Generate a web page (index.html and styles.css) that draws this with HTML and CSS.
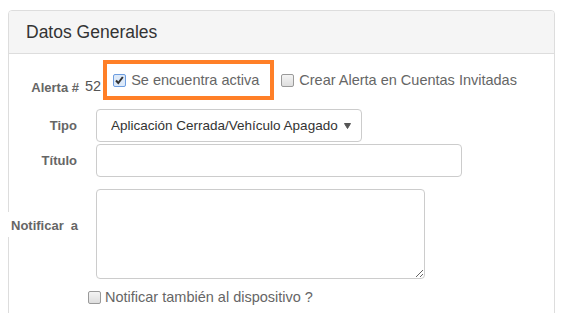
FILE: index.html
```html
<!DOCTYPE html>
<html lang="es">
<head>
  <meta charset="UTF-8">
  <meta name="viewport" content="width=device-width, initial-scale=1.0">
  <title>Datos Generales</title>
  <link rel="stylesheet" href="styles.css">
</head>
<body>
  <div class="panel">
    <div class="panel-heading">Datos Generales</div>
    <div class="panel-body">

      <!-- Alerta -->
      <div class="row row-alert">
        <label class="lbl">Alerta #</label>
        <span class="alert-num">52</span>
        <label class="check highlight"><input type="checkbox" checked>Se encuentra activa</label>
        <label class="check guest"><input type="checkbox">Crear Alerta en Cuentas Invitadas</label>
      </div>

      <!-- Tipo -->
      <div class="row row-type">
        <label class="lbl lbl-tight">Tipo</label>
        <select class="control select-type">
          <option>Aplicación Cerrada/Vehículo Apagado</option>
        </select>
      </div>

      <!-- Titulo -->
      <div class="row row-title">
        <label class="lbl lbl-tight">Título</label>
        <input type="text" class="control input-title">
      </div>

      <!-- Notificar -->
      <div class="row row-notify">
        <label class="lbl lbl-notify">Notificar<span class="gap"></span>a</label>
        <textarea class="control notify-area"></textarea>
      </div>

      <div class="row row-device">
        <label class="check device"><input type="checkbox">Notificar también al dispositivo ?</label>
      </div>

    </div>
  </div>
</body>
</html>
```

FILE: styles.css
```css
body {
  margin: 0;
  padding: 10px 0 0 8px;
  font-family: "Liberation Sans", Arial, sans-serif;
  color: #555;
  background: white;
  overflow: hidden;
}

.panel {
  width: 547px;
  height: 330px;
  box-sizing: border-box;
  border: 1px solid #ddd;
  border-radius: 4px 4px 0 0;
}

.panel-heading {
  height: 43px;
  box-sizing: border-box;
  padding: 11px 17px 0;
  font-size: 17.5px;
  color: #333;
  background: #f5f5f5;
  border-bottom: 1px solid #ddd;
  border-radius: 3px 3px 0 0;
}

.row {
  display: flex;
  align-items: center;
}

.lbl {
  flex: none;
  width: 70px;
  text-align: right;
  font-size: 13px;
  font-weight: bold;
  color: #666;
  white-space: nowrap;
}

.lbl-tight {
  padding-right: 2px;
  box-sizing: border-box;
}

.control {
  margin: 0 0 0 17px;
  box-sizing: border-box;
  border: 1px solid #ccc;
  border-radius: 4px;
  font-family: "Liberation Sans", Arial, sans-serif;
  font-size: 14px;
  color: #333;
  background: white;
}

/* alert row */
.row-alert {
  margin-top: 6px;
}

.row-alert .lbl {
  align-self: flex-start;
  padding-top: 20px;
}

.alert-num {
  margin: 12px 0 0 6px;
  font-size: 14.5px;
  color: #555;
}

.check {
  display: flex;
  align-items: center;
  font-size: 14.5px;
  color: #666;
}

.check input {
  appearance: none;
  -webkit-appearance: none;
  width: 13px;
  height: 13px;
  margin: 0 5px 0 0;
  box-sizing: border-box;
  border: 1px solid #9a9a9a;
  border-radius: 2px;
  background: linear-gradient(#f4f4f4, #dedede);
}

.check input:checked {
  border-color: #6d9de0;
  background: #dce9f9 url("data:image/svg+xml,%3Csvg xmlns='http://www.w3.org/2000/svg' width='11' height='11'%3E%3Cpath d='M2 5.5 L4.3 8 L8.8 2' fill='none' stroke='%23333' stroke-width='2'/%3E%3C/svg%3E") center / 11px 11px no-repeat;
}

.highlight {
  height: 40px;
  box-sizing: border-box;
  margin-left: 2px;
  padding: 0 11px 0 6px;
  border: 4px solid #ff7f27;
}

.guest {
  margin-left: 7px;
}

.guest input {
  margin-right: 5px;
}

/* tipo / titulo */
.row-type {
  margin-top: 9px;
}

.select-type {
  width: 266px;
  height: 33px;
  padding: 0 18px 0 14px;
  font-size: 13.5px;
  appearance: none;
  -webkit-appearance: none;
  background: white url("data:image/svg+xml,%3Csvg xmlns='http://www.w3.org/2000/svg' width='7' height='6'%3E%3Cpath d='M0.5 0.5 H6.5 L3.5 5.5 Z' fill='%23555' stroke='%23555' stroke-width='1'/%3E%3C/svg%3E") right 10px center / 7px 6px no-repeat;
}

.row-title {
  margin-top: 2px;
}

.input-title {
  width: 366px;
  height: 33px;
}

/* notificar */
.row-notify {
  margin-top: 12px;
  align-items: flex-start;
}

.lbl-notify {
  width: 74px;
  margin: 23px 0 0 -1px;
  padding: 2px 0 0 3px;
  box-sizing: border-box;
  line-height: 23px;
  text-align: left;
  background: white;
}

.lbl-notify .gap {
  display: inline-block;
  width: 7px;
}

.notify-area {
  width: 329px;
  height: 90px;
  margin-left: 14px;
}

.row-device {
  margin-top: 10px;
  padding-left: 79px;
}

.device input {
  margin-right: 4px;
}
```
